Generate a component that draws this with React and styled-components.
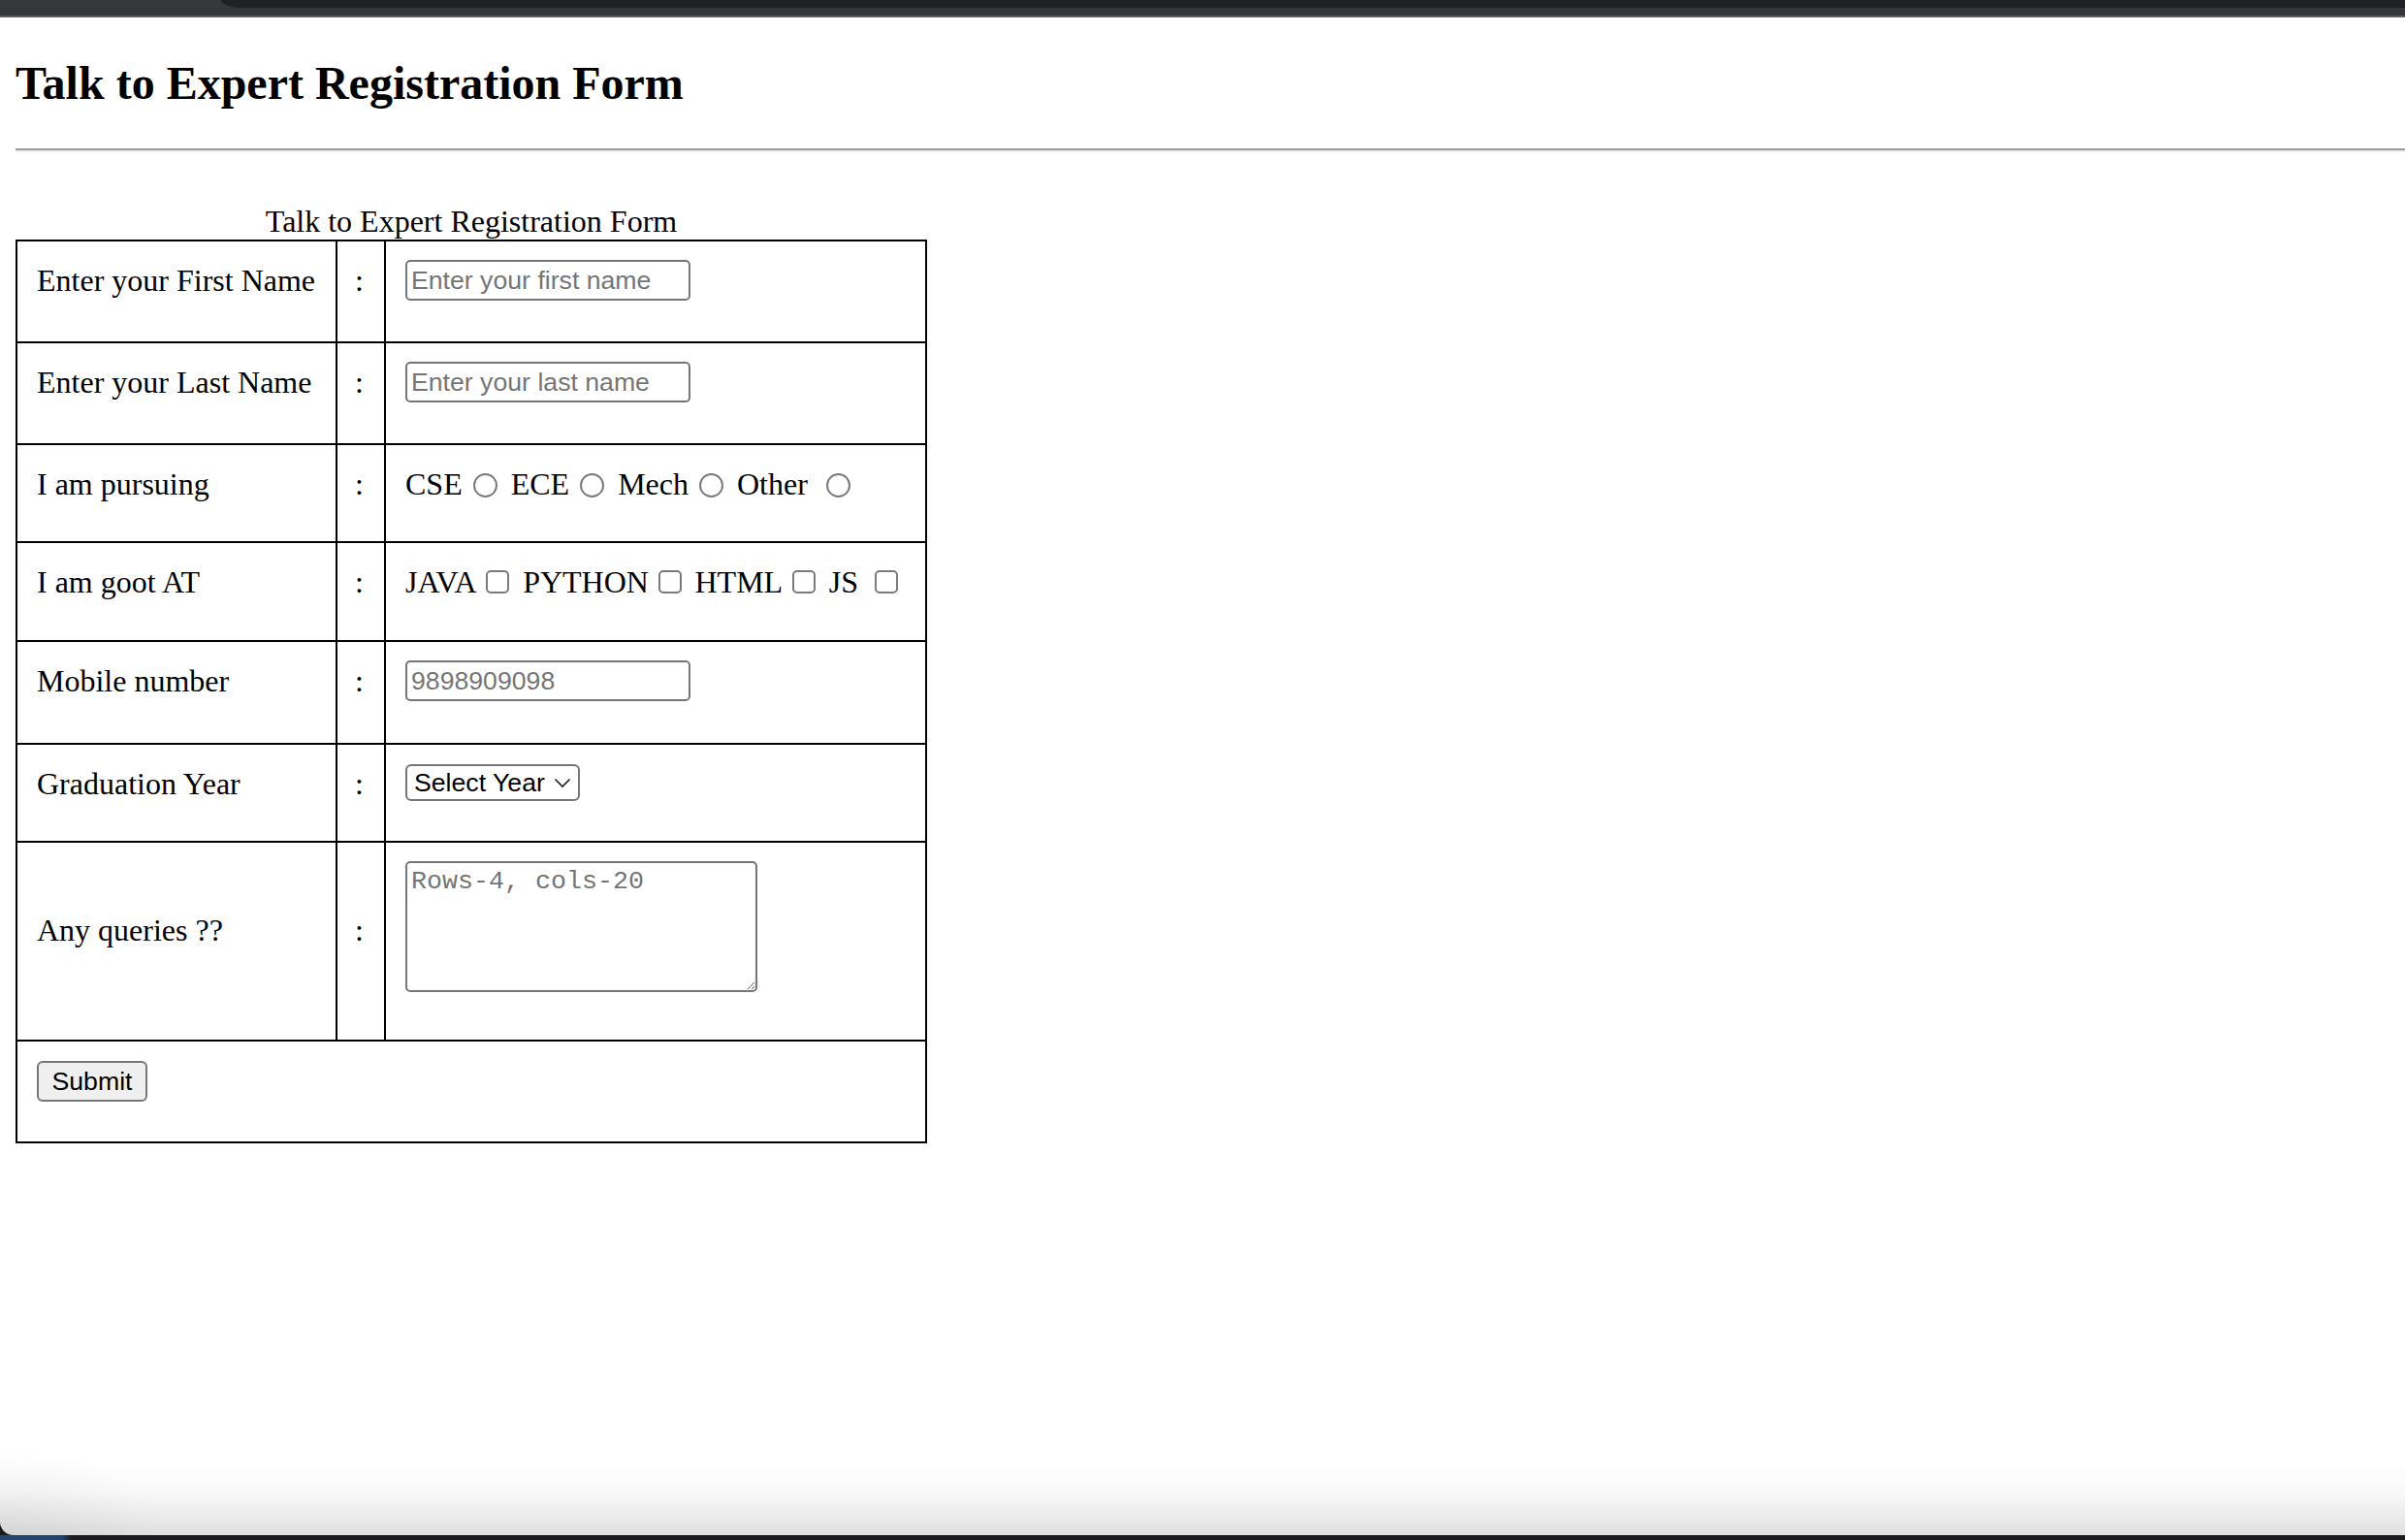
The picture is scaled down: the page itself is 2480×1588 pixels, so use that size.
import React from "react";
import styled, { createGlobalStyle, css } from "styled-components";

const GlobalStyle = createGlobalStyle`
  html, body {
    margin: 0;
    padding: 0;
    background: #1b1b1d;
  }
  body {
    font-family: "Liberation Serif", "Times New Roman", serif;
    color: #000;
  }
  #root {
    height: 100vh;
  }
`;

const Window = styled.div`
  height: 100vh;
  display: flex;
  flex-direction: column;
  overflow: hidden;
  background: #1b1b1d;
`;

const Chrome = styled.header`
  flex: none;
  display: flex;
  flex-direction: column;
`;

const TabRow = styled.div`
  height: 8px;
  display: flex;
  background: #37383b;
`;

const ActiveTab = styled.div`
  width: 228px;
  background: #37383b;
`;

const TabStrip = styled.div`
  flex: 1;
  background: #202124;
  border-bottom-left-radius: 22px 8px;
`;

const Toolbar = styled.div`
  height: 8px;
  background: #35363a;
`;

const ChromeEdge = styled.div`
  height: 2px;
  background: #5d5e62;
`;

const Page = styled.main`
  flex: 1;
  min-height: 0;
  padding: 40px 0 0 16px;
  background:
    linear-gradient(
      to bottom,
      rgba(0, 0, 0, 0) calc(100% - 76px),
      rgba(0, 0, 0, 0.025) calc(100% - 44px),
      rgba(0, 0, 0, 0.12) 100%
    ),
    radial-gradient(ellipse 170px 90px at 0 100%, rgba(0, 0, 0, 0.06), rgba(0, 0, 0, 0)),
    #fff;
  border-bottom-left-radius: 14px;
`;

const Title = styled.h2`
  margin: 0;
  font-size: 48px;
  line-height: 56px;
  font-weight: 700;
`;

const Rule = styled.hr`
  margin: 39px 0 0;
  height: 0;
  border: 0;
  border-top: 2px solid #9a9a9a;
  border-bottom: 2px solid #ededed;
`;

const Form = styled.form`
  width: 940px;
  margin-top: 52px;
`;

const Caption = styled.div`
  text-align: center;
  font-size: 32px;
  line-height: 38px;
`;

const Grid = styled.div`
  display: grid;
  grid-template-columns: 328px 48px 556px;
  grid-template-rows: 103px 103px 99px 100px 104px 99px 203px 103px;
  gap: 2px;
  padding: 2px;
  width: 940px;
  box-sizing: border-box;
  background: #000;
`;

const Cell = styled.div`
  background: #fff;
  padding: 20px;
  padding-left: ${(p) => p.$inset || 20}px;
  font-size: 32px;
  line-height: 40px;
  white-space: nowrap;
  ${(p) =>
    p.$center &&
    css`
      display: flex;
      align-items: center;
      padding-bottom: 44px;
    `}
  ${(p) =>
    p.$span &&
    css`
      grid-column: 1 / -1;
    `}
`;

const controlFont = css`
  font-family: "Liberation Sans", Arial, Helvetica, sans-serif;
  font-size: 26.67px;
  color: #000;
`;

const TextInput = styled.input`
  ${controlFont};
  display: block;
  box-sizing: border-box;
  width: 294px;
  height: 42px;
  margin: -1px 0 0;
  padding: 0 4px;
  border: 2px solid #767676;
  border-radius: 5px;
  background: #fff;
  outline: none;
  &::placeholder {
    color: #757575;
  }
`;

const Radio = styled.input.attrs({ type: "radio" })`
  appearance: none;
  -webkit-appearance: none;
  display: inline-block;
  box-sizing: border-box;
  width: 25px;
  height: 25px;
  margin: 0 14px 0 ${(p) => p.$lead || 11}px;
  border: 2px solid #7b7b7b;
  border-radius: 50%;
  background: #fff;
  vertical-align: -3px;
`;

const Check = styled.input.attrs({ type: "checkbox" })`
  appearance: none;
  -webkit-appearance: none;
  display: inline-block;
  box-sizing: border-box;
  width: 24px;
  height: 24px;
  margin: 0 14px 0 ${(p) => p.$lead || 9.6}px;
  border: 2px solid #7b7b7b;
  border-radius: 5px;
  background: #fff;
  vertical-align: -1px;
`;

const SelectWrap = styled.span`
  position: relative;
  display: inline-block;
  vertical-align: top;
`;

const Select = styled.select`
  ${controlFont};
  appearance: none;
  -webkit-appearance: none;
  display: block;
  box-sizing: border-box;
  width: 180px;
  height: 38px;
  padding: 0 0 0 7px;
  border: 2px solid #767676;
  border-radius: 6px;
  background: #fff;
  outline: none;
`;

const Chevron = styled.svg`
  position: absolute;
  left: 153px;
  top: 14px;
  width: 18px;
  height: 11px;
  pointer-events: none;
`;

const TextArea = styled.textarea`
  display: block;
  box-sizing: border-box;
  width: 363px;
  height: 135px;
  margin: -1px 0 0;
  padding: 4px;
  font-family: "Liberation Mono", "Courier New", monospace;
  font-size: 26.67px;
  color: #000;
  border: 2px solid #767676;
  border-radius: 5px;
  background: #fff;
  outline: none;
  &::placeholder {
    color: #757575;
  }
`;

const SubmitButton = styled.button`
  ${controlFont};
  display: block;
  box-sizing: border-box;
  width: 114px;
  height: 42px;
  padding: 0 12px;
  border: 2px solid #767676;
  border-radius: 6px;
  background: #efefef;
`;

const Dock = styled.footer`
  flex: none;
  height: 5px;
  background: linear-gradient(to right, #23446f 0, #23446f 64px, #1b1b1d 74px);
`;

const rows = [
  {
    label: "Enter your First Name",
    field: <TextInput type="text" placeholder="Enter your first name" />,
  },
  {
    label: "Enter your Last Name",
    field: <TextInput type="text" placeholder="Enter your last name" />,
  },
  {
    label: "I am pursuing",
    field: (
      <>
        CSE<Radio name="branch" />ECE<Radio name="branch" />Mech
        <Radio name="branch" />Other<Radio name="branch" $lead={19} />
      </>
    ),
  },
  {
    label: "I am goot AT",
    field: (
      <>
        JAVA<Check />PYTHON<Check />HTML<Check />JS<Check $lead={17.3} />
      </>
    ),
  },
  {
    label: "Mobile number",
    field: <TextInput type="tel" placeholder="9898909098" />,
  },
  {
    label: "Graduation Year",
    field: (
      <SelectWrap>
        <Select defaultValue="">
          <option value="">Select Year</option>
          <option>2022</option>
          <option>2023</option>
          <option>2024</option>
          <option>2025</option>
          <option>2026</option>
        </Select>
        <Chevron viewBox="0 0 18 11">
          <polyline
            points="1.5,1.5 9,9 16.5,1.5"
            fill="none"
            stroke="#222"
            strokeWidth="1.7"
          />
        </Chevron>
      </SelectWrap>
    ),
  },
  {
    label: "Any queries ??",
    center: true,
    field: <TextArea rows={4} cols={20} placeholder="Rows-4, cols-20" />,
  },
];

export default function App() {
  return (
    <>
      <GlobalStyle />
      <Window>
        <Chrome>
          <TabRow>
            <ActiveTab />
            <TabStrip />
          </TabRow>
          <Toolbar />
          <ChromeEdge />
        </Chrome>
        <Page>
          <Title>Talk to Expert Registration Form</Title>
          <Rule />
          <Form onSubmit={(e) => e.preventDefault()}>
            <Caption>Talk to Expert Registration Form</Caption>
            <Grid>
              {rows.map((r) => (
                <React.Fragment key={r.label}>
                  <Cell $center={r.center}>{r.label}</Cell>
                  <Cell $center={r.center} $inset={18}>
                    :
                  </Cell>
                  <Cell>{r.field}</Cell>
                </React.Fragment>
              ))}
              <Cell $span>
                <SubmitButton type="submit">Submit</SubmitButton>
              </Cell>
            </Grid>
          </Form>
        </Page>
        <Dock />
      </Window>
    </>
  );
}
